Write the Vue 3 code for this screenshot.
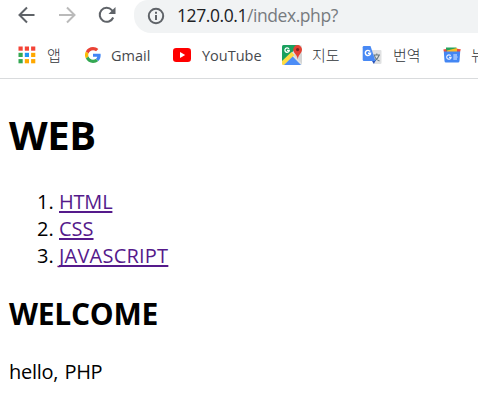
<script setup>
const topics = [
  { label: 'HTML', key: 'html' },
  { label: 'CSS', key: 'css' },
  { label: 'JAVASCRIPT', key: 'javascript' },
]
const tiles = ['#f44336', '#f44336', '#f44336', '#34a853', '#2196f3', '#ffa800', '#34a853', '#ffa800', '#ffa800']
</script>

<template>
  <div class="window">
    <header class="toolbar">
      <svg class="nav back" width="18" height="18" viewBox="0 0 18 18"><path d="M16.500 9H2M9 1.500L1.500 9L9 16.500" /></svg>
      <svg class="nav forward" width="18" height="18" viewBox="0 0 18 18"><path d="M1 9H16M9 1.500L16.500 9L9 16.500" /></svg>
      <svg class="nav reload" width="18" height="18" viewBox="0 0 18 18">
        <path d="M15.200 11.500A7 7 0 1 1 13.900 4.100L15 5.200" />
        <path class="tip" d="M17.500 1V8H10.500Z" />
      </svg>
      <div class="address">
        <svg class="info" width="18" height="18" viewBox="0 0 18 18">
          <circle cx="9" cy="9" r="7.200" />
          <path d="M9 8V13M9 4.800V6.800" />
        </svg>
        <span class="url"><span class="host">127.0.0.1</span>/index.php?</span>
      </div>
    </header>

    <nav class="bookmarks">
      <div class="bookmark apps">
        <svg width="18" height="18" viewBox="0 0 18 18">
          <rect v-for="(c, i) in tiles" :key="i" :x="(i % 3) * 6.300 + 0.500" :y="Math.floor(i / 3) * 6.300 + 0.500" width="4.200" height="4.200" :fill="c" />
        </svg>
        <span class="ko">앱</span>
      </div>
      <div class="bookmark gmail">
        <svg width="16" height="16" viewBox="0 0 48 48">
          <path fill="#ea4335" d="M24 9.500c3.540 0 6.710 1.220 9.210 3.600l6.850-6.850C35.900 2.380 30.470 0 24 0 14.620 0 6.510 5.380 2.560 13.220l7.980 6.190C12.430 13.720 17.740 9.500 24 9.500z" />
          <path fill="#4285f4" d="M46.980 24.550c0-1.570-.15-3.090-.38-4.550H24v9.020h12.940c-.58 2.960-2.260 5.480-4.780 7.180l7.730 6c4.510-4.180 7.090-10.360 7.090-17.650z" />
          <path fill="#fbbc05" d="M10.530 28.590a14.500 14.500 0 0 1 0-9.180l-7.980-6.190a24 24 0 0 0 0 21.560z" />
          <path fill="#34a853" d="M24 48c6.480 0 11.930-2.130 15.890-5.810l-7.730-6C30 37.640 27.240 38.490 24 38.490c-6.260 0-11.570-4.220-13.470-9.910l-7.980 6.200C6.510 42.620 14.620 48 24 48z" />
        </svg>
        <span>Gmail</span>
      </div>
      <div class="bookmark youtube">
        <svg width="18" height="14" viewBox="0 0 18 14">
          <rect width="18" height="14" rx="3.200" fill="#f00" />
          <path d="M7 4L12.200 7L7 10Z" fill="#fff" />
        </svg>
        <span>YouTube</span>
      </div>
      <div class="bookmark maps">
        <svg width="20" height="20" viewBox="0 0 20 20">
          <defs><clipPath id="map-edge"><rect width="20" height="20" rx="1.500" /></clipPath></defs>
          <g clip-path="url(#map-edge)">
            <rect width="20" height="20" fill="#e1e2e1" />
            <path d="M0 0H17L0 18Z" fill="#19a05e" />
            <path d="M0 16L9.500 7L12.500 10L2.500 20H0Z" fill="#ffdc42" />
            <path d="M2 20L10.700 11.400L19 20Z" fill="#4c8df6" />
            <path d="M12 10.500L20 18.500V9L14 6Z" fill="#d4d5d5" />
            <path d="M11.200 4.500a4.400 4.400 0 1 1 8.800 0c0 4-3.700 4.800-4.200 10c-.5-5.200-4.600-6-4.600-10z" fill="#e34133" />
            <circle cx="15.600" cy="4.600" r="1.600" fill="#7d2520" />
            <path d="M7 3.900A2.200 2.200 0 1 0 7.300 5.300H5" fill="none" stroke="#fff" stroke-width="1.300" />
          </g>
        </svg>
        <span class="ko">지도</span>
      </div>
      <div class="bookmark translate">
        <svg width="20" height="20" viewBox="0 0 20 20">
          <path d="M8 5H18.500Q19.500 5 19.500 6V18Q19.500 19 18 19H12Z" fill="#e0e1e2" />
          <path d="M11.500 10H18M14.800 8.500V10M12.500 10.500C13 13.500 15 15 17.500 16M17 10.500C16 13.500 14 15 12.500 16" fill="none" stroke="#687b82" stroke-width="1.100" />
          <path d="M9.500 15H14L11.800 19Z" fill="#2751b8" />
          <path d="M2 1H8.500L13.500 16H2Q.7 16 .7 14.500V2.300Q.7 1 2 1Z" fill="#4889f4" />
          <path d="M8.100 6.500A2.600 2.600 0 1 0 8.500 8.300H6" fill="none" stroke="#fff" stroke-width="1.400" />
        </svg>
        <span class="ko">번역</span>
      </div>
      <div class="bookmark news">
        <svg width="18" height="16" viewBox="0 0 18 16">
          <path d="M3 .5H13.500V5H3Z" fill="#25a35a" />
          <path d="M.3 2.500L3 2L4 5H1Z" fill="#e94d3f" />
          <path d="M4 3.500L14 1L15 5H4Z" fill="#fbb829" />
          <path d="M14 1.800L17.800 2.200L17 5H14Z" fill="#e94d3f" />
          <path d="M.8 4.500H17.200L16.500 14Q16.400 15.500 15 15.500H3Q1.600 15.500 1.500 14Z" fill="#4386f3" />
          <path d="M7.700 8.700A2.200 2.200 0 1 0 8.100 10.300H6M10.300 8H14M10.300 10H14.500M10.300 12H14" fill="none" stroke="#e6efff" stroke-width="1.200" />
        </svg>
        <span class="ko">뉴스</span>
      </div>
    </nav>

    <main class="page">
      <h1>WEB</h1>
      <ol>
        <li v-for="topic in topics" :key="topic.key"><a href="#" :class="topic.key">{{ topic.label }}</a></li>
      </ol>
      <h2>WELCOME</h2>
      <p>hello, PHP</p>
    </main>
  </div>
</template>

<style>
html, body { margin: 0; background: #fff; overflow: hidden; }
</style>

<style scoped>
.window { width: 478px; height: 403px; overflow: hidden; background: #fff; font-family: "Open Sans", "Noto Sans CJK KR", sans-serif; }
svg { display: block; flex: none; }
.toolbar { display: flex; height: 33px; padding-left: 18px; box-sizing: border-box; }
.nav { margin-top: 6px; fill: none; stroke: #5f6368; stroke-width: 2; }
.forward { margin-left: 22px; stroke: #bababa; }
.reload { margin-left: 22px; }
.reload .tip { fill: #5f6368; stroke: none; }
.address { display: flex; flex: 1; margin-left: 18px; padding-left: 13px; background: #f1f3f4; height: 33px; border-radius: 14px 0 0 17px / 14px 0 0 17px; }
.info { margin-top: 7px; fill: none; stroke: #5f6368; stroke-width: 2; }
.url { margin-left: 12px; font-size: 17.500px; letter-spacing: -.43px; line-height: 31px; color: #777b7f; white-space: nowrap; }
.host { color: #202124; }
.bookmarks { display: flex; align-items: center; height: 46px; box-sizing: border-box; padding: 0 0 1px 18px; border-bottom: 1px solid #d9dbdd; }
.bookmark { display: flex; align-items: center; flex: none; box-sizing: border-box; font-size: 14.500px; line-height: 22px; color: #46494d; white-space: nowrap; }
.bookmark span { padding-top: 1px; }
.apps { width: 66px; gap: 11px; }
.gmail { width: 89px; gap: 10px; padding-left: 1px; }
.youtube { width: 109px; gap: 11px; }
.maps { width: 80px; gap: 10px; }
.translate { width: 81px; gap: 11px; }
.news { gap: 10px; }
.bookmark .ko { padding-top: 0; font-family: "Noto Sans CJK KR", sans-serif; font-weight: 300; font-size: 15px; color: #303438; }
.page { padding: 29px 9px 0; color: #000; }
h1 { margin: 0; font-size: 40px; line-height: 54px; font-weight: 700; letter-spacing: -.4px; }
ol { margin: 26px 0 0; padding: 0 0 0 50px; font-size: 20px; line-height: 27px; }
a { color: #551a8b; text-decoration: underline; text-decoration-thickness: 2px; text-underline-offset: 2px; text-decoration-skip-ink: none; }
.html { letter-spacing: -.2px; }
.javascript { letter-spacing: .22px; }
h2 { margin: 25px 0 0; font-size: 30px; line-height: 40px; font-weight: 700; letter-spacing: -.25px; }
p { margin: 24px 0 0; font-size: 20px; line-height: 27px; letter-spacing: -.3px; word-spacing: 1.500px; }
</style>
